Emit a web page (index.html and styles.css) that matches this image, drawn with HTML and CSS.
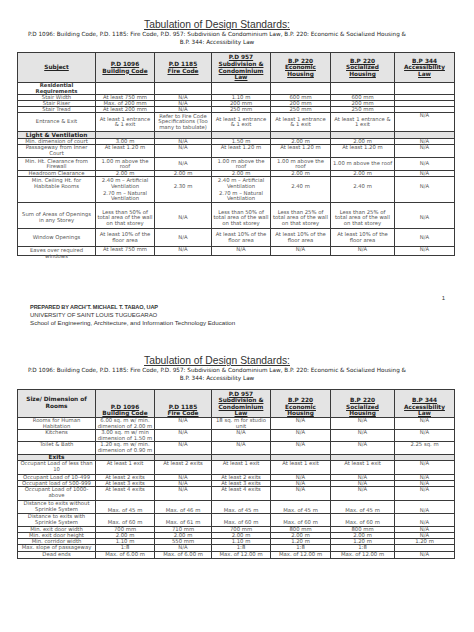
FILE: index.html
```html
<!DOCTYPE html>
<html>
<head>
<meta charset="utf-8">
<title>Tabulation of Design Standards</title>
<link rel="stylesheet" href="styles.css">
</head>
<body>
<main class="doc">
  <section class="sheet sheet-1">
    <header class="doc-head">
      <h1 class="doc-title">Tabulation of Design Standards:</h1>
      <p class="doc-sub">P.D 1096: Building Code, P.D. 1185: Fire Code, P.D. 957: Subdivision &amp; Condominium Law, B.P. 220: Economic &amp; Socialized Housing &amp;<br>B.P. 344: Accessibility Law</p>
    </header>
    <table class="std std-1">
      <colgroup>
        <col class="c1"><col class="c2"><col class="c3"><col class="c4"><col class="c5"><col class="c6"><col class="c7">
      </colgroup>
      <thead>
        <tr class="h30">
          <th>Subject</th>
          <th>P.D 1096<br>Building Code</th>
          <th>P.D 1185<br>Fire Code</th>
          <th>P.D 957<br>Subdivision &amp;<br>Condominium<br>Law</th>
          <th>B.P 220<br>Economic<br>Housing</th>
          <th>B.P 220<br>Socialized<br>Housing</th>
          <th>B.P 344<br>Accessibility<br>Law</th>
        </tr>
      </thead>
      <tbody>
        <tr class="h12">
          <td class="bold">Residential<br>Requirements</td>
          <td></td><td></td><td></td><td></td><td></td><td></td>
        </tr>
        <tr class="h6">
          <td>Stair Width</td><td>At least 750 mm</td><td>N/A</td><td>1.10 m</td><td>600 mm</td><td>600 mm</td><td></td>
        </tr>
        <tr class="h6">
          <td>Stair Riser</td><td>Max. of 200 mm</td><td>N/A</td><td>200 mm</td><td>200 mm</td><td>200 mm</td><td></td>
        </tr>
        <tr class="h6">
          <td>Stair Tread</td><td>At least 200 mm</td><td>N/A</td><td>250 mm</td><td>250 mm</td><td>250 mm</td><td></td>
        </tr>
        <tr class="h19">
          <td>Entrance &amp; Exit</td>
          <td>At least 1 entrance<br>&amp; 1 exit</td>
          <td>Refer to Fire Code<br>Specifications (Too<br>many to tabulate)</td>
          <td>At least 1 entrance<br>&amp; 1 exit</td>
          <td>At least 1 entrance<br>&amp; 1 exit</td>
          <td>At least 1 entrance &amp;<br>1 exit</td>
          <td class="v-top">N/A</td>
        </tr>
        <tr class="h7 sec">
          <td class="sec-label">Light &amp; Ventilation</td>
          <td></td><td></td><td></td><td></td><td></td><td></td>
        </tr>
        <tr class="h6">
          <td>Min. dimension of court</td><td>3.00 m</td><td>N/A</td><td>1.50 m</td><td>2.00 m</td><td>2.00 m</td><td>N/A</td>
        </tr>
        <tr class="h13 top-row">
          <td>Passageway from Inner<br>Court</td><td>At least 1.20 m</td><td>N/A</td><td>At least 1.20 m</td><td>At least 1.20 m</td><td>At least 1.20 m</td><td>N/A</td>
        </tr>
        <tr class="h13">
          <td>Min. Ht. Clearance from<br>Firewall</td>
          <td>1.00 m above the<br>roof</td>
          <td>N/A</td>
          <td>1.00 m above the<br>roof</td>
          <td>1.00 m above the<br>roof</td>
          <td>1.00 m above the roof</td>
          <td>N/A</td>
        </tr>
        <tr class="h6">
          <td>Headroom Clearance</td><td>2.00 m</td><td>2.00 m</td><td>2.00 m</td><td>2.00 m</td><td>2.00 m</td><td>N/A</td>
        </tr>
        <tr class="h25 ceiling">
          <td class="v-top">Min. Ceiling Ht. for<br>Habitable Rooms</td>
          <td class="v-top">2.40 m – Artificial<br>Ventilation<span class="para">2.70 m – Natural<br>Ventilation</span></td>
          <td class="v-hi">2.30 m</td>
          <td class="v-top">2.40 m – Artificial<br>Ventilation<span class="para">2.70 m – Natural<br>Ventilation</span></td>
          <td class="v-hi">2.40 m</td>
          <td class="v-hi">2.40 m</td>
          <td class="v-hi">N/A</td>
        </tr>
        <tr class="h26 low-row">
          <td>Sum of Areas of Openings<br>in any Storey</td>
          <td>Less than 50% of<br>total area of the wall<br>on that storey</td>
          <td>N/A</td>
          <td>Less than 50% of<br>total area of the wall<br>on that storey</td>
          <td>Less than 25% of<br>total area of the wall<br>on that storey</td>
          <td>Less than 25% of<br>total area of the wall<br>on that storey</td>
          <td>N/A</td>
        </tr>
        <tr class="h18">
          <td>Window Openings</td>
          <td>At least 10% of the<br>floor area</td>
          <td>N/A</td>
          <td>At least 10% of the<br>floor area</td>
          <td>At least 10% of the<br>floor area</td>
          <td>At least 10% of the<br>floor area</td>
          <td>N/A</td>
        </tr>
        <tr class="h9 top-row">
          <td><div class="spill">Eaves over required<br>windows</div></td>
          <td>At least 750 mm</td><td>N/A</td><td>N/A</td><td>N/A</td><td>N/A</td><td>N/A</td>
        </tr>
      </tbody>
    </table>
    <div class="page-no">1</div>
    <footer class="prep">
      <p class="prep-by">PREPARED BY ARCH’T. MICHAEL T. TABAO, UAP</p>
      <p class="prep-uni">UNIVERSITY OF SAINT LOUIS TUGUEGARAO</p>
      <p class="prep-school">School of Engineering, Architecture, and Information Technology Education</p>
    </footer>
  </section>

  <section class="sheet sheet-2">
    <header class="doc-head">
      <h1 class="doc-title">Tabulation of Design Standards:</h1>
      <p class="doc-sub">P.D 1096: Building Code, P.D. 1185: Fire Code, P.D. 957: Subdivision &amp; Condominium Law, B.P. 220: Economic &amp; Socialized Housing &amp;<br>B.P. 344: Accessibility Law</p>
    </header>
    <table class="std std-2">
      <colgroup>
        <col class="c1"><col class="c2"><col class="c3"><col class="c4"><col class="c5"><col class="c6"><col class="c7">
      </colgroup>
      <thead>
        <tr class="h28">
          <th class="plain">Size/ Dimension of<br>Rooms</th>
          <th>P.D 1096<br>Building Code</th>
          <th>P.D 1185<br>Fire Code</th>
          <th>P.D 957<br>Subdivision &amp;<br>Condominium<br>Law</th>
          <th>B.P 220<br>Economic<br>Housing</th>
          <th>B.P 220<br>Socialized<br>Housing</th>
          <th>B.P 344<br>Accessibility<br>Law</th>
        </tr>
      </thead>
      <tbody>
        <tr class="h12">
          <td>Rooms for Human<br>Habitation</td><td>6.00 sq. m w/ min.<br>dimension of 2.00 m</td><td>N/A</td><td>18 sq. m for studio<br>unit</td><td>N/A</td><td>N/A</td><td>N/A</td>
        </tr>
        <tr class="h12">
          <td>Kitchens</td><td>3.00 sq. m w/ min<br>dimension of 1.50 m</td><td>N/A</td><td>N/A</td><td>N/A</td><td>N/A</td><td>N/A</td>
        </tr>
        <tr class="h13">
          <td>Toilet &amp; Bath</td><td>1.20 sq. m w/ min.<br>dimension of 0.90 m</td><td>N/A</td><td>N/A</td><td>N/A</td><td>N/A</td><td>2.25 sq. m</td>
        </tr>
        <tr class="h6 sec">
          <td class="sec-label">Exits</td><td></td><td></td><td></td><td></td><td></td><td></td>
        </tr>
        <tr class="h14">
          <td>Occupant Load of less than<br>10</td><td>At least 1 exit</td><td>At least 2 exits</td><td>At least 1 exit</td><td>At least 1 exit</td><td>At least 1 exit</td><td>N/A</td>
        </tr>
        <tr class="h6">
          <td>Occupant Load of 10-499</td><td>At least 2 exits</td><td>N/A</td><td>At least 2 exits</td><td>N/A</td><td>N/A</td><td>N/A</td>
        </tr>
        <tr class="h6">
          <td>Occupant load of 500-999</td><td>At least 3 exits</td><td>N/A</td><td>At least 3 exits</td><td>N/A</td><td>N/A</td><td>N/A</td>
        </tr>
        <tr class="h14">
          <td>Occupant Load of 1000-<br>above</td><td>At least 4 exits</td><td>N/A</td><td>At least 4 exits</td><td>N/A</td><td>N/A</td><td>N/A</td>
        </tr>
        <tr class="h13 bottom-row">
          <td>Distance to exits without<br>Sprinkle System</td><td>Max. of 45 m</td><td>Max. of 46 m</td><td>Max. of 45 m</td><td>Max. of 45 m</td><td>Max. of 45 m</td><td>N/A</td>
        </tr>
        <tr class="h12 bottom-row">
          <td>Distance to exits with<br>Sprinkle System</td><td>Max. of 60 m</td><td>Max. of 61 m</td><td>Max. of 60 m</td><td>Max. of 60 m</td><td>Max. of 60 m</td><td>N/A</td>
        </tr>
        <tr class="h6">
          <td>Min. exit door width</td><td>700 mm</td><td>710 mm</td><td>700 mm</td><td>800 mm</td><td>800 mm</td><td>N/A</td>
        </tr>
        <tr class="h6">
          <td>Min. exit door height</td><td>2.00 m</td><td>2.00 m</td><td>2.00 m</td><td>2.00 m</td><td>2.00 m</td><td>N/A</td>
        </tr>
        <tr class="h6">
          <td>Min. corridor width</td><td>1.10 m</td><td>550 mm</td><td>1.10 m</td><td>1.20 m</td><td>1.20 m</td><td>1.20 m</td>
        </tr>
        <tr class="h7">
          <td>Max. slope of passageway</td><td>1:8</td><td>N/A</td><td>1:8</td><td>1:8</td><td>1:8</td><td></td>
        </tr>
        <tr class="h7">
          <td>Dead ends</td><td>Max. of 6.00 m</td><td>Max. of 6.00 m</td><td>Max. of 12.00 m</td><td>Max. of 12.00 m</td><td>Max. of 12.00 m</td><td>N/A</td>
        </tr>
      </tbody>
    </table>
  </section>
</main>
</body>
</html>
```

FILE: styles.css
```css
* { box-sizing: border-box; }

html, body {
  margin: 0;
  padding: 0;
  background: #ffffff;
}

body {
  width: 474px;
  height: 632px;
  overflow: hidden;
  font-family: "DejaVu Sans", Verdana, sans-serif;
  color: #555;
}

.doc {
  padding-top: 20px;
}

.sheet-2 {
  margin-top: 29px;
}

.doc-head {
  width: 434px;
  text-align: center;
}

.doc-title {
  margin: 0;
  font-family: "Liberation Sans", Arial, sans-serif;
  font-weight: normal;
  font-size: 10.3px;
  line-height: 10px;
  color: #333;
  text-decoration: underline;
}

.doc-sub {
  margin: 0;
  font-size: 5.7px;
  line-height: 8px;
  color: #222;
  white-space: nowrap;
}

.std {
  margin: 6px 0 0 17px;
  width: 437px;
  table-layout: fixed;
  border-collapse: collapse;
}

.std-2 { margin-top: 7px; }

.c1 { width: 78px; }
.c2 { width: 59px; }
.c3 { width: 57px; }
.c4 { width: 59px; }
.c5 { width: 60px; }
.c6 { width: 64px; }
.c7 { width: 60px; }

.std th,
.std td {
  border: 1px solid #3a3a3a;
  padding: 0;
  text-align: center;
  vertical-align: middle;
  white-space: nowrap;
  overflow: visible;
}

.std td {
  font-size: 5.3px;
  line-height: 5.6px;
  font-weight: normal;
  color: #555;
}

.h6 td,
.h7 td {
  line-height: 5px;
}

.std th {
  background: #e4e4e4;
  font-size: 5.8px;
  line-height: 6.6px;
  font-weight: bold;
  color: #222;
  text-decoration: underline;
}

.std th.plain {
  text-decoration: none;
  vertical-align: top;
  padding-top: 6px;
}

.std-2 th { vertical-align: bottom; }
.std-2 td { vertical-align: top; }
.std-2 .bottom-row td { vertical-align: bottom; }
.std-2 .bottom-row td:first-child { vertical-align: top; }

.std td.bold {
  font-weight: bold;
  color: #333;
}

.sec td { background: #e4e4e4; }

.std td.sec-label {
  font-weight: bold;
  font-size: 5.8px;
  color: #222;
}

.std td.v-top { vertical-align: top; }

.std td.v-hi {
  vertical-align: top;
  padding-top: 7px;
}

.top-row td { vertical-align: top; }

.low-row td { padding-top: 5px; }

.ceiling td.v-top { padding-top: 1px; }

.para {
  display: block;
  margin-top: 1.5px;
}

.spill {
  height: 6px;
  padding-top: 1px;
}

.h6 { height: 6px; }
.h7 { height: 7px; }
.h9 { height: 9px; }
.h12 { height: 12px; }
.h13 { height: 13px; }
.h14 { height: 14px; }
.h18 { height: 18px; }
.h19 { height: 19px; }
.h25 { height: 25px; }
.h26 { height: 26px; }
.h28 { height: 28px; }
.h30 { height: 30px; }

.page-no {
  margin-top: 38px;
  padding-right: 29px;
  text-align: right;
  font-family: "Liberation Sans", Arial, sans-serif;
  font-size: 6px;
  line-height: 8px;
  color: #333;
}

.prep {
  margin-top: 1px;
  padding-left: 30px;
  font-family: "Liberation Sans", Arial, sans-serif;
  color: #333;
}

.prep p {
  margin: 0;
  line-height: 8px;
  white-space: nowrap;
}

.prep-by {
  font-size: 5.6px;
  font-weight: bold;
  letter-spacing: -0.1px;
}

.prep-uni {
  font-size: 6px;
  letter-spacing: -0.05px;
}

.prep-school {
  font-size: 6.2px;
}
```
